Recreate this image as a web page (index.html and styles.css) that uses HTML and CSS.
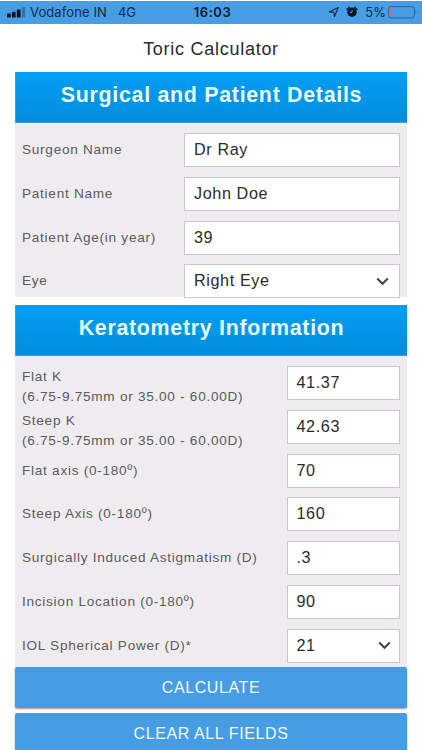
FILE: index.html
```html
<!DOCTYPE html>
<html lang="en">
<head>
<meta charset="utf-8">
<title>Toric Calculator</title>
<link rel="stylesheet" href="styles.css">
</head>
<body>
<header class="status">
  <div class="status-left">
    <svg class="signal" width="19" height="11" viewBox="0 0 19 11"><rect x="0" y="6.6" width="3.7" height="3.9" rx=".6"/><rect x="4.9" y="4.8" width="3.7" height="5.7" rx=".6"/><rect x="9.8" y="2.4" width="3.7" height="8.1" rx=".6"/><rect x="14.8" y="0" width="3.4" height="10.5" rx=".6" opacity=".3"/></svg>
    <span class="carrier">Vodafone IN</span>
    <span>4G</span>
  </div>
  <div class="clock">16:03</div>
  <div class="status-right">
    <svg width="12" height="12" viewBox="0 0 12 12"><path d="M1.2 5.9 10.3 1.5 6.4 10.5 6 6.2Z" fill="none" stroke="#102a42" stroke-width="1.1" stroke-linejoin="round"/></svg>
    <svg class="alarm" width="12" height="12" viewBox="0 0 12 12"><circle cx="6" cy="6.3" r="4.7"/><path d="M.9 3.5 3.2 1.2M11.1 3.5 8.8 1.2" stroke="#06121f" stroke-width="1.3" stroke-linecap="round"/><path d="M6 3.6V6.6H3.9" fill="none" stroke="#479ee5" stroke-width="1"/></svg>
    <span class="percent">5%</span>
    <svg width="30" height="13" viewBox="0 0 30 13"><rect x=".6" y=".6" width="25.8" height="11.3" rx="2.4" fill="none" stroke="#2f638f" stroke-width="1"/><rect x="2" y="2" width="1.8" height="8.5" rx=".7" fill="#d9667c"/><path d="M27.7 4.2q1.8 2 0 4z" fill="#2f638f"/></svg>
  </div>
</header>
<main>
  <h1>Toric Calculator</h1>
  <section class="patient">
    <h2>Surgical and Patient Details</h2>
    <div class="panel">
      <div class="row"><span class="label">Surgeon Name</span><div class="field">Dr Ray</div></div>
      <div class="row"><span class="label">Patient Name</span><div class="field">John Doe</div></div>
      <div class="row"><span class="label">Patient Age(in year)</span><div class="field">39</div></div>
      <div class="row"><span class="label">Eye</span><div class="field">Right Eye<svg class="chevron" width="13" height="9" viewBox="0 0 13 9"><path d="M1.2 1.5 6.5 6.8 11.8 1.5"/></svg></div></div>
    </div>
  </section>
  <section class="kerato">
    <h2>Keratometry Information</h2>
    <div class="panel">
      <div class="row"><span class="label double">Flat K<br>(6.75-9.75mm or 35.00 - 60.00D)</span><div class="field">41.37</div></div>
      <div class="row"><span class="label double">Steep K<br>(6.75-9.75mm or 35.00 - 60.00D)</span><div class="field">42.63</div></div>
      <div class="row"><span class="label">Flat axis (0-180º)</span><div class="field">70</div></div>
      <div class="row"><span class="label">Steep Axis (0-180º)</span><div class="field">160</div></div>
      <div class="row"><span class="label">Surgically Induced Astigmatism (D)</span><div class="field">.3</div></div>
      <div class="row"><span class="label">Incision Location (0-180º)</span><div class="field">90</div></div>
      <div class="row"><span class="label">IOL Spherical Power (D)*</span><div class="field">21<svg class="chevron" width="13" height="9" viewBox="0 0 13 9"><path d="M1.2 1.5 6.5 6.8 11.8 1.5"/></svg></div></div>
    </div>
  </section>
  <div class="actions">
    <button type="button">CALCULATE</button>
    <button type="button">CLEAR ALL FIELDS</button>
  </div>
</main>
</body>
</html>
```
FILE: styles.css
```css
* { box-sizing: border-box; }
html, body { height: 750px; overflow: hidden; }
body {
  margin: 0;
  padding-top: 1px;
  background: #fff;
  font-family: "Liberation Sans", Arial, sans-serif;
  letter-spacing: .73px;
}
svg { display: block; flex: none; }
.status {
  height: 23px;
  padding: 0 4px 0 7px;
  display: grid;
  grid-template-columns: 1fr auto 1fr;
  align-items: center;
  background: #479ee5;
  color: #102a42;
  font: 13px/22px Inter, sans-serif;
  letter-spacing: 0;
}
.status-left, .status-right { display: flex; align-items: center; margin-top: -1px; }
.signal { margin-right: 4px; fill: #06121f; }
.carrier { margin-right: 11px; letter-spacing: .1px; }
.clock { margin-top: -1px; font-weight: 600; letter-spacing: .5px; color: #0a1b2c; }
.status-right { justify-content: flex-end; }
.alarm { margin: 0 7px 0 6px; fill: #06121f; }
.percent { margin-right: 2px; font-size: 13px; }
main { padding: 0 15px; }
h1 {
  margin: 0;
  height: 48px;
  color: #2b2b2b;
  font-size: 18px;
  font-weight: 400;
  line-height: 50px;
  letter-spacing: .73px;
  text-align: center;
}
h2 {
  margin: 0;
  height: 51px;
  border: solid #3b9de0;
  border-width: 0 0 1px 1px;
  background: linear-gradient(#039ff5, #028ddd);
  color: #e9fbff;
  font-size: 21.4px;
  font-weight: 700;
  line-height: 46px;
  letter-spacing: .7px;
  text-align: center;
}
.panel { padding: 5px 7px 0; background: #eeecee; }
.patient .panel { height: 174px; }
.kerato { margin-top: 8px; }
.kerato .panel { height: 311px; }
.row {
  height: 43.85px;
  display: flex;
  align-items: center;
  justify-content: space-between;
}
.label { color: #5c5a5c; font-size: 13.6px; line-height: 20px; white-space: nowrap; }
.double { padding-top: 8px; }
.field {
  width: 216px;
  height: 34px;
  padding: 0 10px 1px 9px;
  display: flex;
  align-items: center;
  justify-content: space-between;
  border: 1px solid #c9c7c9;
  background: #fff;
  color: #2b2b2b;
  font-size: 16.2px;
  letter-spacing: .6px;
}
.kerato .field { width: 113px; padding-left: 8.5px; }
.kerato .field .chevron { margin-right: -2px; }
.chevron { margin-top: 1px; fill: none; stroke: #444; stroke-width: 2; }
.actions { display: flex; flex-direction: column; gap: 5px; }
button {
  height: 41px;
  padding: 1px 0 0;
  border: 0;
  border-radius: 2px;
  background: #479de4;
  box-shadow: 0 1px 2px rgba(0, 0, 0, .4);
  color: #eef9ff;
  font: 16px "Liberation Sans", Arial, sans-serif;
  letter-spacing: .6px;
}
```
